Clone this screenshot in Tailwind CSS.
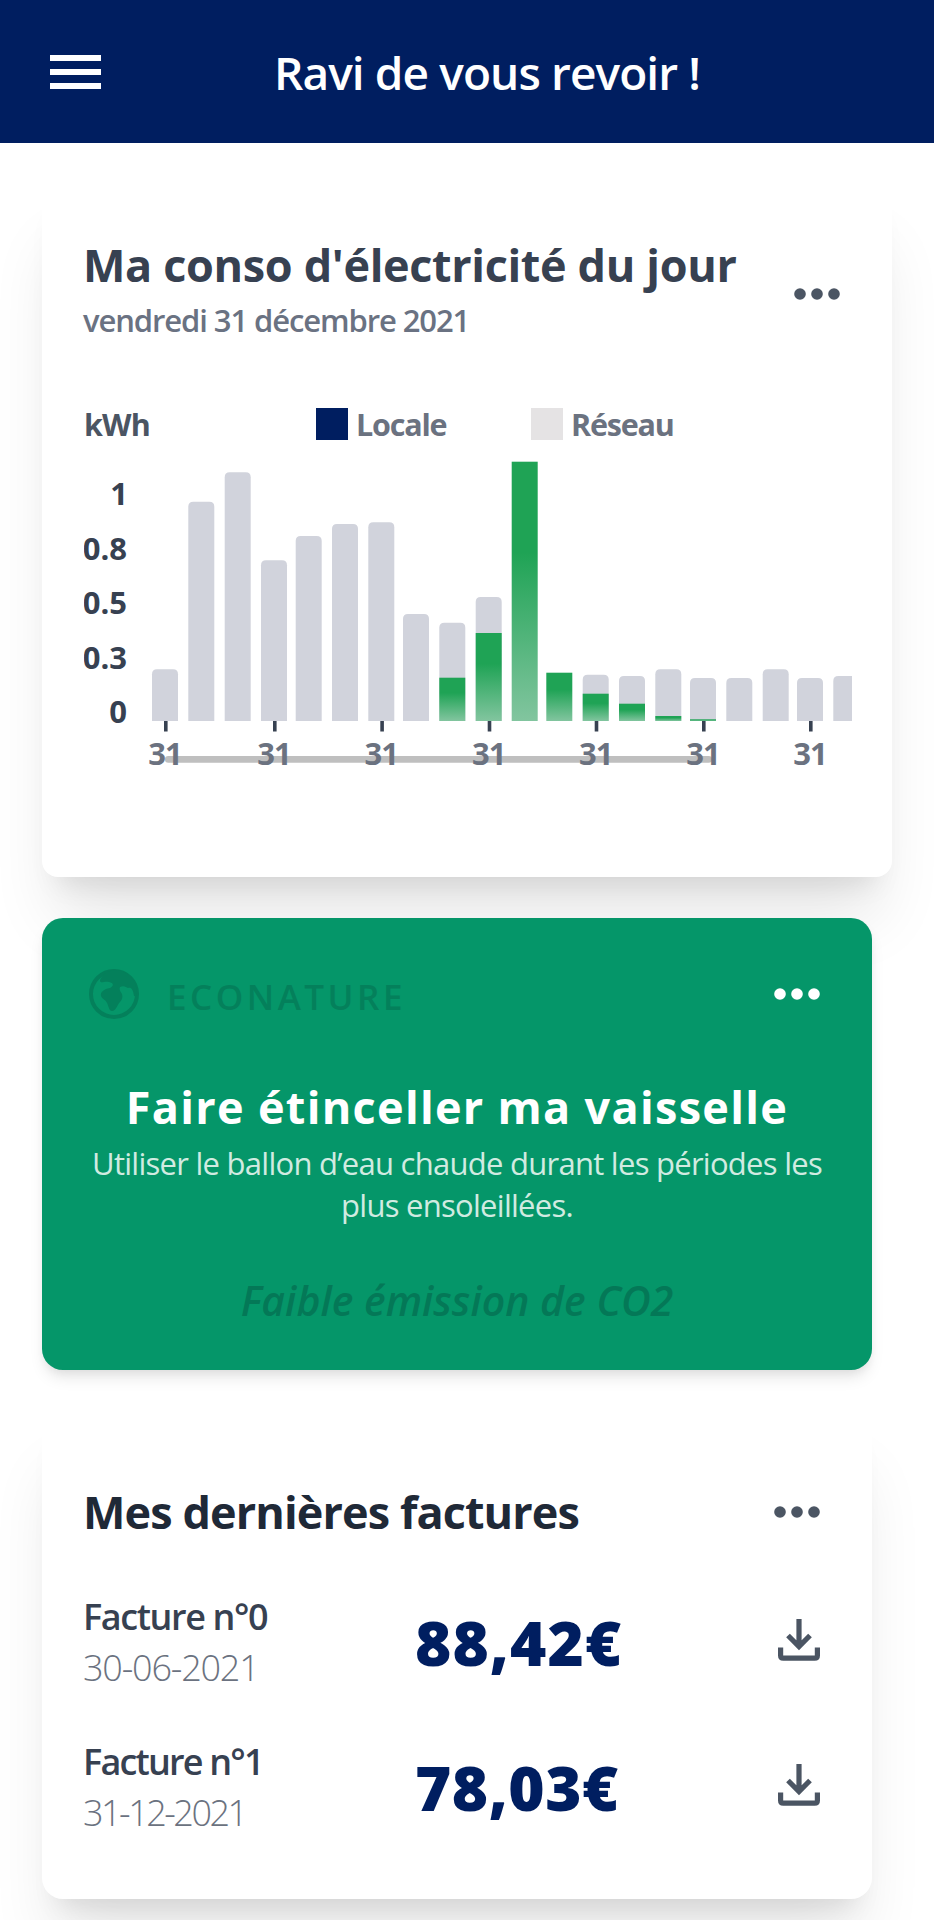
<!DOCTYPE html>
<html lang="fr">
<head>
    <meta charset="UTF-8">
    <meta name="viewport" content="width=device-width, initial-scale=1.0">
    <title>Tableau de bord</title>
    <script src="https://cdn.jsdelivr.net/npm/@tailwindcss/browser@4"></script>
</head>
<body class="bg-white w-[934px] h-[1920px] overflow-hidden font-['Open_Sans','Noto_Sans',sans-serif]">

    <!-- En-tête -->
    <header class="h-[143px] bg-[#001e60] flex items-center pl-[50px] pr-[61px]">
        <button class="flex flex-col gap-2 w-[51px]" aria-label="Menu">
            <span class="h-1.5 w-full bg-white"></span>
            <span class="h-1.5 w-full bg-white"></span>
            <span class="h-1.5 w-full bg-white"></span>
        </button>
        <h1 class="flex-1 pt-0.5 text-center text-white text-[46px] font-semibold tracking-[-0.9px] whitespace-nowrap">Ravi de vous revoir !</h1>
    </header>

    <main class="pl-[42px] pt-[42px]">

        <!-- Consommation du jour -->
        <section class="w-[850px] h-[692px] rounded-2xl bg-white px-[42px] pt-[50px] shadow-[0_52px_65px_-13px_rgba(0,0,0,0.1),0_21px_26px_-16px_rgba(0,0,0,0.1)]">
            <div class="flex justify-between">
                <div class="-ml-px whitespace-nowrap">
                    <h2 class="text-[45px] leading-[60px] font-bold text-[#374151] tracking-[-0.35px]">Ma conso d'électricité du jour</h2>
                    <p class="mt-1 text-[31px] leading-[42px] font-semibold text-gray-500 tracking-[-1.1px]">vendredi 31 décembre 2021</p>
                </div>
                <svg class="mt-[53px] mr-[10px] shrink-0 fill-[#4b5563]" width="46" height="12" viewBox="0 0 46 12"><circle cx="6" cy="6" r="5.8"/><circle cx="23" cy="6" r="5.8"/><circle cx="40" cy="6" r="5.8"/></svg>
            </div>

            <div class="mt-[63px] flex items-center text-[30.5px] leading-[40px] font-bold text-[#6b7280] tracking-[-1.2px]">
                <span class="w-[232px] text-[#4b5563] tracking-[-0.8px]">kWh</span>
                <div class="w-[215px] flex items-center gap-2">
                    <span class="size-8 bg-[#001e60]"></span>
                    <span>Locale</span>
                </div>
                <div class="flex items-center gap-2">
                    <span class="size-8 bg-[#e5e3e4]"></span>
                    <span>Réseau</span>
                </div>
            </div>

            <svg id="chart" class="block" width="768" height="330" viewBox="84 444 768 330">
                <defs>
                    <linearGradient id="local" x1="0" y1="0" x2="0" y2="1">
                        <stop offset="0.35" stop-color="#1fa355"/>
                        <stop offset="1" stop-color="#82c59f"/>
                    </linearGradient>
                </defs>
                <g id="bars"></g>
                <rect x="165" y="756" width="547" height="6.7" rx="3.3" fill="#bfbfbf"/>
                <g id="ticks" class="text-[31px] font-bold fill-[#6b7280]" text-anchor="middle"></g>
                <g class="text-[31px] font-bold fill-[#374151]" text-anchor="end">
                    <text x="128" y="505">1</text>
                    <text x="127" y="560">0.8</text>
                    <text x="127" y="614">0.5</text>
                    <text x="127" y="669">0.3</text>
                    <text x="127" y="723">0</text>
                </g>
            </svg>
        </section>

        <!-- Conseil éco -->
        <section class="mt-[41px] w-[830px] h-[452px] rounded-[21px] bg-[#059669] pt-[51px] shadow-[0_10px_16px_-3px_rgba(0,0,0,0.1),0_5px_10px_-3px_rgba(0,0,0,0.06)]">
            <div class="flex items-center pl-[47px] pr-[52px] h-[50px]">
                <svg class="fill-[#04805b]" width="50" height="50" viewBox="0 0 50 50">
                    <circle cx="25" cy="25" r="23" fill="none" stroke="#04805b" stroke-width="4"/>
                    <path d="M18 3C13 7 11 10 11 12C12 15 15 12 20 13C25 14 25 17 21 19C15 20 11 23 12 27C13 30 17 31 18 34C20 38 20 42 23 42C27 42 28 36 31 33C33 31 34 28 33 25C31 22 30 20 31 18C35 16 37 18 39 19C42 18 44 20 45 27L48 27C49 13 39 1 25 1Z"/>
                </svg>
                <span class="ml-7 mt-[5px] text-[35px] leading-[50px] font-semibold text-[#04805b] tracking-[3.5px]">ECONATURE</span>
                <svg class="ml-auto fill-white" width="46" height="12" viewBox="0 0 46 12"><circle cx="6" cy="6" r="5.8"/><circle cx="23" cy="6" r="5.8"/><circle cx="40" cy="6" r="5.8"/></svg>
            </div>
            <div class="mt-[58px] text-center whitespace-nowrap">
                <h2 class="text-[45px] leading-[60px] font-bold text-white tracking-[1.3px]">Faire étinceller ma vaisselle</h2>
                <p class="mt-[6px] text-[31px] leading-[41.5px] text-[#d1ebe1] tracking-[-0.73px]">Utiliser le ballon d’eau chaude durant les périodes les<br>plus ensoleillées.</p>
                <p class="mt-[48px] text-[41px] leading-[52px] font-semibold italic text-[#047857]">Faible émission de CO2</p>
            </div>
        </section>

        <!-- Factures -->
        <section class="mt-[42px] w-[830px] h-[487px] rounded-[21px] bg-white pl-[42px] pr-[52px] pt-[70px] shadow-[0_52px_65px_-13px_rgba(0,0,0,0.1),0_21px_26px_-16px_rgba(0,0,0,0.1)]">
            <div class="flex items-center justify-between">
                <h2 class="-ml-px text-[45px] leading-[60px] font-bold text-[#1f2937] tracking-[-0.9px]">Mes dernières factures</h2>
                <svg class="fill-[#4b5563]" width="46" height="12" viewBox="0 0 46 12"><circle cx="6" cy="6" r="5.8"/><circle cx="23" cy="6" r="5.8"/><circle cx="40" cy="6" r="5.8"/></svg>
            </div>

            <div class="mt-[49px] flex items-center h-[102px]">
                <div class="w-[331px] -ml-px mr-px text-[36px] leading-[51px]">
                    <p class="font-semibold text-[#374151] tracking-[-1.4px]">Facture n°0</p>
                    <p class="font-light text-[#6b7280] tracking-[-1.2px]">30-06-2021</p>
                </div>
                <span class="text-[62px] leading-[62px] font-['Noto_Sans','Open_Sans',sans-serif] font-black text-[#001e60] tracking-[1.1px]">88,42€</span>
                <svg class="ml-auto -mt-1" width="42" height="42" viewBox="0 0 42 42" fill="none" stroke="#4b5563" stroke-width="5.2">
                    <path d="M21 0V27M10 16.5L21 27.5L32 16.5"/><path d="M2.6 28.5V36.5Q2.6 39.2 5.3 39.2H36.7Q39.4 39.2 39.4 36.5V28.5"/>
                </svg>
            </div>

            <div class="mt-[43px] flex items-center h-[102px]">
                <div class="w-[331px] -ml-px mr-px text-[36px] leading-[51px]">
                    <p class="font-semibold text-[#374151] tracking-[-1.8px]">Facture n°1</p>
                    <p class="font-light text-[#6b7280] tracking-[-2.5px]">31-12-2021</p>
                </div>
                <span class="text-[62px] leading-[62px] font-['Noto_Sans','Open_Sans',sans-serif] font-black text-[#001e60] tracking-[0.5px]">78,03€</span>
                <svg class="ml-auto -mt-1" width="42" height="42" viewBox="0 0 42 42" fill="none" stroke="#4b5563" stroke-width="5.2">
                    <path d="M21 0V27M10 16.5L21 27.5L32 16.5"/><path d="M2.6 28.5V36.5Q2.6 39.2 5.3 39.2H36.7Q39.4 39.2 39.4 36.5V28.5"/>
                </svg>
            </div>
        </section>
    </main>

    <script>
        // [position, hauteur totale, hauteur locale]
        const data = [
            [152, 51.7, 0], [188.3, 219.3, 0], [224.7, 248.7, 0], [261, 160.7, 0],
            [295.7, 185, 0], [332, 197, 0], [368.3, 198.7, 0], [403, 107, 0],
            [439.3, 98.3, 43.3], [475.7, 124, 88], [511.7, 259.3, 259.3], [546.3, 48.3, 48.3],
            [582.7, 46.3, 27.3], [619, 45, 17.3], [655.3, 51.7, 5], [690, 43, 1.7],
            [726.3, 43, 0], [762.7, 51.7, 0], [797, 43, 0], [833.3, 45, 0]
        ];
        const base = 721;
        const w = 26;

        let bars = '';
        let ticks = '';
        data.forEach(([x, total, local], i) => {
            if (total > local) {
                const top = base - total;
                bars += `<path fill="#d1d3dc" d="M${x} ${base}V${top + 5}Q${x} ${top} ${x + 5} ${top}H${x + w - 5}Q${x + w} ${top} ${x + w} ${top + 5}V${base}Z"/>`;
            }
            if (local) {
                bars += `<rect x="${x}" y="${base - local}" width="${w}" height="${local}" fill="url(#local)"/>`;
            }
            // une étiquette toutes les trois barres
            if (i % 3 === 0) {
                ticks += `<rect x="${x + 12}" y="${base}" width="3.6" height="10.5" fill="#374151"/>`;
                ticks += `<text x="${x + 13}" y="765" letter-spacing="-1">31</text>`;
            }
        });
        document.getElementById('bars').innerHTML = bars;
        document.getElementById('ticks').innerHTML = ticks;
    </script>
</body>
</html>
